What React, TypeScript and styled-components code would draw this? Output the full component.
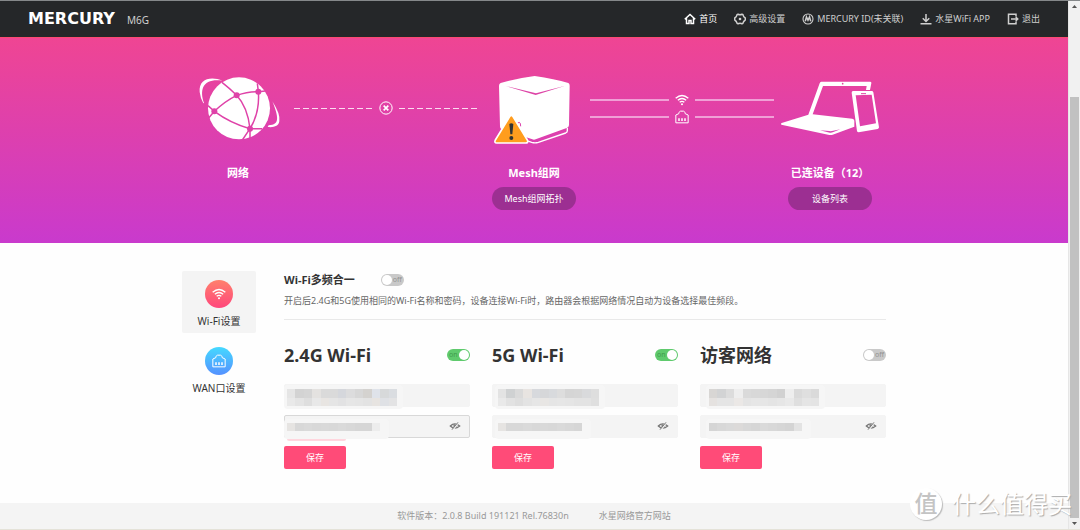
import React, { useState } from "react";
import styled, { createGlobalStyle, css } from "styled-components";

const GlobalStyle = createGlobalStyle`
  * { box-sizing: border-box; }
  body {
    margin: 0;
    background: #fefefe;
    color: #333;
    font-family: "Noto Sans", "Noto Sans CJK SC", sans-serif;
    font-size: 9px;
    line-height: 12px;
  }
  h1, h2, h3, p { margin: 0; }
  button, input { font-family: inherit; }
  a { color: inherit; text-decoration: none; }
`;

const Window = styled.div`
  position: relative;
  display: flex;
  min-height: 100vh;
  border-top: 1px solid #85888a;
  border-bottom: 1px solid #e4e2d8;
`;

const Page = styled.div`
  flex: 1;
  min-width: 0;
  display: flex;
  flex-direction: column;
`;

const TopBar = styled.header`
  display: flex;
  align-items: center;
  justify-content: space-between;
  height: 37px;
  padding: 0 28px;
  background: #252729;
  border-bottom: 1px solid #fb4a70;
  color: #d0d0d0;
`;

const Brand = styled.div`
  display: flex;
  align-items: center;
  gap: 12px;
`;

const Logo = styled.span`
  color: #fff;
  font: bold 16px/20px "DejaVu Sans", sans-serif;
`;

const Model = styled.span`
  font-size: 10px;
  padding-top: 2px;
`;

const Nav = styled.nav`
  display: flex;
  gap: 17px;
`;

const NavLink = styled.a<{ $active?: boolean }>`
  display: flex;
  align-items: center;
  gap: 3px;
  white-space: nowrap;
  color: ${(p) => (p.$active ? "#fff" : "#cfcfcf")};
  svg { width: 12px; height: 12px; }
`;

const Hero = styled.section`
  display: flex;
  justify-content: center;
  padding: 32px 0 33px;
  background: linear-gradient(#ef4593, #c93acd);
  color: #fff;
`;

const Topology = styled.div`
  display: flex;
  flex: 0 1 704px;
`;

const Device = styled.div`
  flex: 0 0 112px;
  display: flex;
  flex-direction: column;
  align-items: center;
  svg { width: 112px; height: 76px; }
`;

const DeviceName = styled.h3`
  margin-top: 19px;
  font-size: 11px;
  line-height: 16px;
  white-space: nowrap;
`;

const Pill = styled.button`
  width: 84px;
  height: 23px;
  margin-top: 6px;
  padding: 0;
  border: 0;
  border-radius: 12px;
  background: #9c2f92;
  color: #fff;
  font-size: 9px;
`;

const Link = styled.div`
  flex: 1;
  display: flex;
  flex-direction: column;
  justify-content: center;
  gap: 3px;
  height: 76px;
`;

const LinkRow = styled.div`
  display: flex;
  align-items: center;
  gap: 6px;
  svg { width: 14px; height: 14px; flex: none; }
`;

const Line = styled.span<{ $dashed?: boolean }>`
  flex: 1;
  ${(p) =>
    p.$dashed
      ? css`
          height: 1px;
          background: repeating-linear-gradient(90deg, #fbdcf0 0 6px, transparent 6px 9px);
        `
      : css`
          height: 2px;
          background: #f0a0d6;
        `}
`;

const Content = styled.div`
  flex: 1;
  display: flex;
  justify-content: center;
  padding: 28px 0 34px;
`;

const ContentInner = styled.div`
  flex: 0 1 704px;
  display: flex;
  gap: 28px;
`;

const SideNav = styled.nav`
  flex: 0 0 74px;
  display: flex;
  flex-direction: column;
  gap: 5px;
`;

const SideItem = styled.a<{ $active?: boolean }>`
  display: flex;
  flex-direction: column;
  align-items: center;
  gap: 5px;
  height: 62px;
  padding-top: 9px;
  border-radius: 2px;
  background: ${(p) => (p.$active ? "#f4f4f4" : "transparent")};
  font-size: 10px;
  line-height: 16px;
  white-space: nowrap;
`;

const SideIcon = styled.span<{ $from: string; $to: string }>`
  display: grid;
  place-items: center;
  width: 28px;
  height: 28px;
  border-radius: 50%;
  background: linear-gradient(${(p) => p.$from}, ${(p) => p.$to});
  color: #fff;
  svg { width: 14px; height: 14px; }
`;

const Settings = styled.main`
  flex: 1;
  min-width: 0;
`;

const Merge = styled.section`
  height: 49px;
  border-bottom: 1px solid #e9e9e9;
`;

const MergeHead = styled.div`
  display: flex;
  align-items: center;
  gap: 26px;
  height: 18px;
`;

const MergeTitle = styled.h2`
  font-size: 11px;
  line-height: 18px;
`;

const Hint = styled.p`
  margin-top: 6px;
  color: #666;
  white-space: nowrap;
`;

const Bands = styled.div`
  display: grid;
  grid-template-columns: repeat(3, 1fr);
  gap: 22px;
  margin-top: 23px;
`;

const Band = styled.form`
  display: flex;
  flex-direction: column;
  gap: 8px;
`;

const BandHead = styled.div`
  display: flex;
  align-items: center;
  justify-content: space-between;
  height: 24px;
  margin-bottom: 9px;
`;

const BandTitle = styled.h2`
  font-size: 18px;
  line-height: 24px;
  white-space: nowrap;
`;

const Switch = styled.label<{ $on: boolean }>`
  position: relative;
  display: flex;
  align-items: center;
  justify-content: ${(p) => (p.$on ? "flex-start" : "flex-end")};
  width: 23px;
  height: 12px;
  padding: 0 2px;
  border-radius: 6px;
  background: ${(p) => (p.$on ? "#5fca6d" : "#c9c9c9")};
  color: ${(p) => (p.$on ? "#419b4d" : "#929292")};
  font-size: 7px;
  line-height: 10px;
  input {
    position: absolute;
    top: 1px;
    left: ${(p) => (p.$on ? "12px" : "1px")};
    width: 10px;
    height: 10px;
    margin: 0;
    appearance: none;
    border-radius: 50%;
    background: #fff;
  }
`;

const Field = styled.div`
  position: relative;
  display: flex;
`;

const Input = styled.input<{ $focused?: boolean }>`
  width: 100%;
  height: 23px;
  padding: 0 24px 0 8px;
  border: 1px solid ${(p) => (p.$focused ? "#d8d8d8" : "#f4f4f4")};
  border-radius: 2px;
  outline: 0;
  background: #f4f4f4;
  font-size: 9px;
`;

const Reveal = styled.button`
  position: absolute;
  top: 5px;
  right: 9px;
  width: 12px;
  height: 12px;
  padding: 0;
  border: 0;
  background: none;
  color: #777;
  svg { display: block; width: 12px; height: 12px; }
`;

const Mask = styled.div<{ $left: number; $tall?: boolean; $smear?: boolean }>`
  position: absolute;
  top: ${(p) => (p.$tall ? 1 : 4)}px;
  left: ${(p) => p.$left - 3}px;
  padding: ${(p) => (p.$tall ? "4px 6px 3px 3px" : "4px 9px 8px 3px")};
  border-radius: 4px;
  background: #f6f6f6;
  pointer-events: none;
  svg { display: block; height: ${(p) => (p.$tall ? 17 : 8)}px; }
  ${(p) =>
    p.$smear &&
    css`
      &::after {
        content: "";
        position: absolute;
        top: 100%;
        left: 3px;
        width: 59px;
        height: 2px;
        border-radius: 0 0 4px 4px;
        background: #ffd6de;
      }
    `}
`;

const Save = styled.button`
  width: 62px;
  height: 23px;
  padding: 0;
  border: 0;
  border-radius: 2px;
  background: #ff4b78;
  color: #fff;
  font-size: 9px;
`;

const Footer = styled.footer`
  display: flex;
  align-items: center;
  justify-content: center;
  gap: 30px;
  height: 26px;
  background: #f4f4f4;
  color: #999;
`;

const ScrollBar = styled.aside`
  flex: 0 0 12px;
  display: flex;
  flex-direction: column;
  align-items: center;
  border-left: 1px solid #e6e6e6;
  background: #f1f1f1;
  color: #555;
  svg { flex: none; width: 11px; height: 11px; }
`;

const Thumb = styled.div`
  flex: 1;
  width: 9px;
  margin-top: 85px;
  background: #c1c1c1;
`;

const Watermark = styled.div`
  position: absolute;
  right: 8px;
  bottom: 9px;
  display: flex;
  align-items: center;
  gap: 10px;
  color: #fff;
  font-size: 24px;
  line-height: 32px;
  text-shadow: 1px 1px 1px #aaa;
  white-space: nowrap;
  pointer-events: none;
`;

const WatermarkSeal = styled.span`
  width: 32px;
  height: 32px;
  border-radius: 50%;
  background: #fff;
  box-shadow: 1px 1px 1px #bbb;
  color: #c4c4c4;
  font-size: 23px;
  font-weight: 500;
  line-height: 30px;
  text-align: center;
  text-shadow: none;
`;

const HomeIcon = () => (
  <svg viewBox="0 0 24 24" fill="none" stroke="currentColor" strokeWidth="3">
    <path d="M1.500 12.500 12 3l10.500 9.500M5 10.500V21h5v-6h4v6h5V10.500" />
  </svg>
);
const GearIcon = () => (
  <svg viewBox="0 0 24 24" fill="none" stroke="currentColor" strokeWidth="3" strokeLinejoin="round">
    <path d="M8 2.500q4 2 8 0l2 1q.5 4 4.500 6.500v4q-4 2.500-4.500 6.500l-2 1q-4-2-8 0l-2-1Q5.500 16.500 1.500 14v-4Q5.500 7.500 6 3.500z" />
    <circle cx="12" cy="12" r="2.600" fill="currentColor" stroke="none" />
  </svg>
);
const MercuryIcon = () => (
  <svg viewBox="0 0 24 24" fill="none" stroke="currentColor" strokeWidth="2.200">
    <circle cx="12" cy="12" r="10" />
    <path d="M6.500 16.500 9 8l3 6.500L15 8l2.500 8.500" strokeWidth="3" />
  </svg>
);
const DownloadIcon = () => (
  <svg viewBox="0 0 24 24" fill="none" stroke="currentColor" strokeWidth="3">
    <path d="M12 2v15M5.500 10.500 12 17l6.500-6.500M1 21.500h22" />
  </svg>
);
const ExitIcon = () => (
  <svg viewBox="0 0 24 24" fill="none" stroke="currentColor" strokeWidth="3">
    <path d="M18 7V2.500H3v19h15V17M8 12h13M17.500 8l4 4-4 4" />
  </svg>
);
const WifiIcon = () => (
  <svg viewBox="0 0 42 42" fill="none" stroke="currentColor" strokeWidth="4">
    <path d="M2 16Q21-1 40 16M8.500 22Q21 11 33.500 22M14 28q7-6 14 0" />
    <circle cx="21" cy="34" r="3" fill="currentColor" stroke="none" />
  </svg>
);
const PortIcon = () => (
  <svg viewBox="0 0 42 42" fill="none" stroke="currentColor" strokeWidth="3">
    <path d="M2.500 38.500V15l9-4V7.500l5-4h9l5 4V11l9 4v23.500z" strokeLinejoin="round" />
    <path d="M12 25v8M21 25v8M30 25v8" strokeWidth="4.500" />
  </svg>
);
const CrossIcon = () => (
  <svg viewBox="0 0 42 42" fill="none" stroke="currentColor" strokeWidth="3">
    <circle cx="21" cy="21" r="18.500" />
    <path d="m14 14 14 14M28 14 14 28" strokeWidth="5" />
  </svg>
);
const EyeOffIcon = () => (
  <svg viewBox="0 0 36 36" fill="none" stroke="currentColor" strokeWidth="4">
    <path d="M4 18Q17 5 32 18 17 31 4 18z" />
    <circle cx="18" cy="18" r="5" fill="currentColor" stroke="none" />
    <path d="M12 29 28 7" stroke="#f4f4f4" strokeWidth="5" />
    <path d="M9 29 27 7" strokeWidth="3" />
  </svg>
);

const GlobeArt = () => (
  <svg viewBox="6 30 336 228" fill="none" role="img" aria-label="网络">
    <circle cx="177" cy="145" r="93" fill="#fff" />
    <g stroke="#df42a8" strokeWidth="4.500">
      <path d="M126 67Q148 84 170 106Q134 124 103 154L84 137M103 154 86 174M103 154Q152 190 210 206L246 206M170 106Q203 142 210 206V238M210 206 187 240M170 106Q204 94 235 95L256 93M235 95 232 70M235 95Q240 156 210 206" />
    </g>
    <g fill="#df42a8">
      <circle cx="170" cy="106" r="9" />
      <circle cx="235" cy="95" r="9" />
      <circle cx="103" cy="154" r="9" />
      <circle cx="210" cy="206" r="9" />
    </g>
    <g fill="#fff">
      <path d="M128 62C91 48 56 57 59 96Q61 114 70 130L72 129C58 89 68 54 128 62z" />
      <path d="M277 124Q302 163 298 184C296 199 281 203 263 201L266 196C300 195 296 171 277 124z" />
    </g>
  </svg>
);
const RouterArt = () => (
  <svg viewBox="-6 30 336 228" role="img" aria-label="Mesh组网">
    <path d="M164 48q60 9 101 21 4 2 4 8l-2 118q0 5-5 8l-95 35q-5 2-10 0L64 207q-4-2-4-8L57 78q0-7 5-9 47-14 102-21z" fill="#fff" />
    <path d="m77 78 91 22 88-23-89 28z" fill="#dd43a6" />
    <path d="M262 204v8q0 5-5 7l-82 28q-10 3-20 0L64 215" fill="none" stroke="#fff" strokeWidth="4" />
    <path d="M112 190q6-6 9 0l1 9" fill="none" stroke="#dc41ad" strokeWidth="3" />
    <path d="M89 170q5-8 10 0l43 70q4 9-5 9H50q-8 0-4-9z" fill="#ff9d1e" stroke="#fff" strokeWidth="5" strokeLinejoin="round" />
    <path d="M88 192q6-5 12 0l-3 31h-6z" fill="#333" />
    <circle cx="94" cy="234" r="6" fill="#333" />
  </svg>
);
const DevicesArt = () => (
  <svg viewBox="42 30 336 228" role="img" aria-label="已连设备">
    <path d="M184 65H331q4 0 3 5l-4 20H318l2-12H189L158 163l119 13q6 1 6 6v18l-65 24q-5 2-10 1L64 194q-3-3 1-5l80-25L179 70q1-5 5-5z" fill="#fff" />
    <path d="m180 211 30 7q4 1 8-1l23-9-25 5q-4 1-8 0z" fill="#d941b0" />
    <path d="M279 93h56q4 0 5 4l17 105q0 4-4 5l-57 10q-4 0-5-4L275 98q0-5 4-5zm8 13 13 93 48-9-13-86z" fill="#fff" fillRule="evenodd" />
    <path d="M303 101h15" stroke="#df43a5" strokeWidth="3" />
    <circle cx="248" cy="71" r="2.500" fill="#e3459f" />
  </svg>
);

const NAV = [
  { label: "首页", Icon: HomeIcon },
  { label: "高级设置", Icon: GearIcon },
  { label: "MERCURY ID(未关联)", Icon: MercuryIcon },
  { label: "水星WiFi APP", Icon: DownloadIcon },
  { label: "退出", Icon: ExitIcon },
];

type MosaicData = { width: number; rows: string[][] };

const Mosaic = ({ width, rows }: MosaicData) => (
  <svg width={width} viewBox={`0 0 ${rows[0].length} ${rows.length}`} preserveAspectRatio="none" shapeRendering="crispEdges">
    {rows.map((row, y) =>
      row.map((shade, x) => <rect key={`${x}-${y}`} x={x} y={y} width="1" height="1" fill={`#${shade}`} />)
    )}
  </svg>
);

const split = (s: string) => s.split(" ");

const BANDS = [
  {
    title: "2.4G Wi-Fi",
    on: true,
    focused: true,
    left: 3,
    name: {
      width: 110,
      rows: [
        split("e5e5e5 d3d3d3 d5d5d5 e4e2e0 dadada dadada d5d7dc dcdcdd d7d7d7 d4d2cf dfe3ea d7d9da dadde1"),
        split("e9e9e9 e4e4e4 dedede e8e8e8 e8e5e2 e5e5e5 e2e2e3 e6e6e6 e5e5e5 e3e3e3 e7e4e1 dfe1e5 e3e3e4"),
      ],
    },
    pass: { width: 93, rows: [split("e6e4e2 d8d8d8 dadada d8d8d8 d9d9d9 d8d8d8 dadada d8d8d8 d6d6d6 d6d6d6 ededed")] },
  },
  {
    title: "5G Wi-Fi",
    on: true,
    left: 6,
    name: {
      width: 101,
      rows: [
        split("e3e3e3 cfd1d2 dadada e8e4e1 d7d9dd d6d7d9 d8dadd dddddd d5d5d5 d6d6d6 d9dadc dedede"),
        split("e9e9e9 e2e2e2 dedede e3e3e3 e6e6e6 e8e6e4 e5e5e5 e6e6e6 e5e5e5 e3e3e3 e3e3e3 dfdfdf"),
      ],
    },
    pass: { width: 84, rows: [split("e6e4e2 d8d8d8 d8d8d8 dadada d8d8d8 d9d9d9 d8d8d8 dadada d8d8d8 d6d6d6")] },
  },
  {
    title: "访客网络",
    on: false,
    left: 9,
    name: {
      width: 110,
      rows: [
        split("d8d6d4 d2d3d4 dcdcdc eeeeee dadada d8d8d8 d7d7d7 d5d5d5 d1d1d1 eeeeee dadada dfdfdf dadada"),
        split("e5e2e0 e5e5e5 e5e5e5 ebe8e6 e4e4e4 e6e6e6 e6e6e6 e4e4e4 e6e6e6 e9e9e9 dfdfdf e5e5e5 e4e4e4"),
      ],
    },
    pass: { width: 93, rows: [split("d5d5d5 d8d8d8 dadada dcdad9 d8d8d8 d6d6d6 dadada d8d8d8 d6d6d6 d4d4d4 e3e3e3")] },
  },
];

function Toggle({ initial, label }: { initial: boolean; label: string }) {
  const [on, setOn] = useState(initial);
  return (
    <Switch $on={on}>
      <input type="checkbox" aria-label={label} checked={on} onChange={() => setOn(!on)} />
      {on ? "on" : "off"}
    </Switch>
  );
}

export default function App() {
  return (
    <>
      <GlobalStyle />
      <Window>
        <Page>
          <TopBar>
            <Brand>
              <Logo>MERCURY</Logo>
              <Model>M6G</Model>
            </Brand>
            <Nav>
              {NAV.map(({ label, Icon }, i) => (
                <NavLink href="#" key={label} $active={i === 0}>
                  <Icon />
                  {label}
                </NavLink>
              ))}
            </Nav>
          </TopBar>

          <Hero>
            <Topology>
              <Device>
                <GlobeArt />
                <DeviceName>网络</DeviceName>
              </Device>
              <Link>
                <LinkRow>
                  <Line $dashed />
                  <CrossIcon />
                  <Line $dashed />
                </LinkRow>
              </Link>
              <Device>
                <RouterArt />
                <DeviceName>Mesh组网</DeviceName>
                <Pill type="button">Mesh组网拓扑</Pill>
              </Device>
              <Link>
                <LinkRow>
                  <Line />
                  <WifiIcon />
                  <Line />
                </LinkRow>
                <LinkRow>
                  <Line />
                  <PortIcon />
                  <Line />
                </LinkRow>
              </Link>
              <Device>
                <DevicesArt />
                <DeviceName>已连设备（12）</DeviceName>
                <Pill type="button">设备列表</Pill>
              </Device>
            </Topology>
          </Hero>

          <Content>
            <ContentInner>
              <SideNav>
                <SideItem href="#" $active>
                  <SideIcon $from="#ff806c" $to="#ff477c">
                    <WifiIcon />
                  </SideIcon>
                  Wi-Fi设置
                </SideItem>
                <SideItem href="#">
                  <SideIcon $from="#45d9ff" $to="#5591ff">
                    <PortIcon />
                  </SideIcon>
                  WAN口设置
                </SideItem>
              </SideNav>

              <Settings>
                <Merge>
                  <MergeHead>
                    <MergeTitle>Wi-Fi多频合一</MergeTitle>
                    <Toggle initial={false} label="Wi-Fi多频合一" />
                  </MergeHead>
                  <Hint>
                    开启后2.4G和5G使用相同的Wi-Fi名称和密码，设备连接Wi-Fi时，路由器会根据网络情况自动为设备选择最佳频段。
                  </Hint>
                </Merge>

                <Bands>
                  {BANDS.map((band) => (
                    <Band key={band.title} onSubmit={(e) => e.preventDefault()}>
                      <BandHead>
                        <BandTitle>{band.title}</BandTitle>
                        <Toggle initial={band.on} label={band.title} />
                      </BandHead>
                      <Field>
                        <Input type="text" aria-label={`${band.title} 名称`} />
                        <Mask $left={band.left} $tall>
                          <Mosaic {...band.name} />
                        </Mask>
                      </Field>
                      <Field>
                        <Input type="password" aria-label={`${band.title} 密码`} $focused={band.focused} />
                        <Mask $left={band.left} $smear={band.focused}>
                          <Mosaic {...band.pass} />
                        </Mask>
                        <Reveal type="button" aria-label="显示密码">
                          <EyeOffIcon />
                        </Reveal>
                      </Field>
                      <Save type="submit">保存</Save>
                    </Band>
                  ))}
                </Bands>
              </Settings>
            </ContentInner>
          </Content>

          <Footer>
            <span>软件版本：2.0.8 Build 191121 Rel.76830n</span>
            <a href="#">水星网络官方网站</a>
          </Footer>
        </Page>

        <ScrollBar aria-hidden="true">
          <svg viewBox="0 0 11 11">
            <path d="M3 7h5L5.500 4z" fill="currentColor" />
          </svg>
          <Thumb />
          <svg viewBox="0 0 11 11">
            <path d="M3 4h5L5.500 7z" fill="currentColor" />
          </svg>
        </ScrollBar>

        <Watermark>
          <WatermarkSeal>值</WatermarkSeal>
          什么值得买
        </Watermark>
      </Window>
    </>
  );
}
